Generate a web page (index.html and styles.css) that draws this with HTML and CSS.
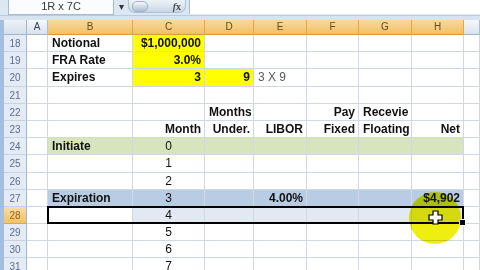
FILE: index.html
```html
<!DOCTYPE html>
<html lang="en">
<head>
  <meta charset="UTF-8" />
  <meta name="viewport" content="width=device-width, initial-scale=1.0" />
  <title>FRA - 1R x 7C</title>
  <link rel="stylesheet" href="styles.css">
</head>
<body>
  <div class="fbar">
    <div class="namebox">1R x 7C</div>
    <div class="nb-arrow">▾</div>
    <div class="fx-pill">
      <span class="grip"></span>
      <span class="fx"><i>f</i>x</span>
    </div>
    <div class="finput"></div>
  </div>

  <div class="sheet" id="sheet"></div>

  <script>
    const cols = ["A", "B", "C", "D", "E", "F", "G", "H", "I"];

    // [row, fill, A, B, C, D, E, F, G, H]  text|classes
    const rows = [
      [18, "", "", "Notional|b", "$1,000,000|b r y"],
      [19, "", "", "FRA Rate|b", "3.0%|b r y"],
      [20, "", "", "Expires|b", "3|b r y", "9|b r y", "3 X 9|g"],
      [21, ""],
      [22, "", "", "", "", "Months|b r", "", "Pay|b r", "Recevie|b r"],
      [23, "", "", "", "Month|b r", "Under.|b r", "LIBOR|b r", "Fixed|b r", "Floating|b r", "Net|b r"],
      [24, "green", "", "Initiate|b", "0|c"],
      [25, "", "", "", "1|c"],
      [26, "", "", "", "2|c"],
      [27, "blue", "", "Expiration|b", "3|c", "", "4.00%|b r", "", "", "$4,902|b r"],
      [28, "shade", "", "", "4|c"],
      [29, "", "", "", "5|c"],
      [30, "", "", "", "6|c"],
      [31, "", "", "", "7|c"]
    ];

    function buildSheet() {
      const sheet = document.getElementById("sheet");
      let html = '<div class="corner"></div>';

      cols.forEach(c => {
        const on = c !== "A" && c !== "I";
        // column I is mostly off-screen, its letter isn't visible
        html += `<div class="colhead ${on ? "on" : ""}">${c === "I" ? "" : c}</div>`;
      });

      rows.forEach(row => {
        const [num, fill, ...cells] = row;
        html += `<div class="rowhead ${num === 28 ? "on" : ""}">${num}</div>`;
        cols.forEach((c, i) => {
          const [text = "", cls = ""] = (cells[i] || "").split("|");
          let bg = "";
          if (fill && i >= 1 && i <= 7) bg = fill;
          if (fill === "shade" && i === 1) bg = "";
          html += `<div class="cell ${cls} ${bg}">${text}</div>`;
        });
      });

      html += '<div class="sel"><span class="handle"></span></div>';
      html += '<div class="spot"></div>';
      html += `
        <svg class="cursor" width="15" height="15" viewBox="0 0 15 15">
          <path d="M5 1h5v4h4v5h-4v4H5v-4H1V5h4z" fill="#fff" stroke="#000" stroke-width="1.2"/>
        </svg>`;
      sheet.innerHTML = html;
    }

    buildSheet();
  </script>
</body>
</html>
```

FILE: styles.css
```css
body {
  margin: 0;
  padding: 0;
  font-family: "Liberation Sans", Arial, sans-serif;
  background-color: #d7e3f1;
  width: 480px;
  height: 270px;
  overflow: hidden;
}
.fbar {
  display: flex;
  align-items: flex-start;
  height: 15px;
  padding-left: 8px;
  margin-bottom: 4px;
  background-color: #dce7f4;
  border-bottom: 1px solid #b9cbe1;
}
.namebox {
  width: 104px;
  height: 14px;
  line-height: 13px;
  background-color: #fbfcfe;
  border: 1px solid #a7bad2;
  border-top: none;
  text-align: center;
  font-size: 11px;
  color: #3a3a3a;
}
.nb-arrow {
  width: 14px;
  font-size: 10px;
  line-height: 13px;
  text-align: center;
  color: #333;
}
.fx-pill {
  display: flex;
  align-items: center;
  justify-content: space-between;
  width: 58px;
  height: 13px;
  padding: 0 4px 0 3px;
  box-sizing: border-box;
  border-radius: 0 0 7px 7px;
  background: linear-gradient(#eef3f9, #c9d6e6);
  border: 1px solid #b0c1d6;
  border-top: none;
}
.grip {
  width: 14px;
  height: 9px;
  border-radius: 5px;
  background: linear-gradient(#f4f7fb, #aebfd4);
  border: 1px solid #9fb2c9;
}
.fx {
  font-family: "Liberation Serif", serif;
  font-size: 10px;
  font-weight: bold;
  color: #4b4b4b;
}
.finput {
  flex: 1;
  height: 14px;
  margin-left: 3px;
  background-color: #fff;
  border-left: 1px solid #a7bad2;
}
.sheet {
  position: relative;
  display: grid;
  grid-template-columns: 23px 21px 85px 72px 49px 53px 52px 53px 52px 1fr;
  grid-template-rows: 15px repeat(14, 17.2px);
  border-left: 4px solid #a4bedf;
  background-color: #fff;
  height: 251px;
}
.corner {
  background: linear-gradient(#eef2f8, #d5dfec);
  border-right: 1px solid #9eb6ce;
  border-bottom: 1px solid #9eb6ce;
}
.colhead {
  font-size: 10px;
  line-height: 14px;
  text-align: center;
  color: #2c4566;
  background: linear-gradient(#f6f8fb, #d9e2ee);
  border-right: 1px solid #a9bdd4;
  border-bottom: 1px solid #9eb6ce;
}
.colhead.on {
  color: #6a4a16;
  background: linear-gradient(#f9d9a0, #f2c064);
  border-right-color: #e0a84c;
  border-bottom-color: #d99a3a;
}
.rowhead {
  font-size: 10px;
  text-align: center;
  line-height: 17px;
  color: #5a6e92;
  background-color: #e4ebf5;
  border-right: 1px solid #9eb6ce;
  border-bottom: 1px solid #c6d3e3;
}
.rowhead.on {
  color: #9a6418;
  background: linear-gradient(#f9dca6, #f1c266);
  border-bottom-color: #e0a84c;
}
.cell {
  font-size: 12px;
  line-height: 17px;
  padding: 0 3px 0 4px;
  white-space: nowrap;
  overflow: visible;
  color: #111;
  border-right: 1px solid #d0d7e5;
  border-bottom: 1px solid #d0d7e5;
}
.cell.b {
  font-weight: bold;
}
.cell.r {
  text-align: right;
}
.cell.c {
  text-align: center;
  padding: 0;
}
.cell.g {
  color: #5b5b5b;
}
.cell.y {
  background-color: #ffff00;
}
.cell.green {
  background-color: #d8e4bc;
}
.cell.blue {
  background-color: #b8cce4;
}
.cell.shade {
  background-color: #e3e9f2;
}
/* absolutely placed inside its grid area, so it doesn't shift the cells */
.sel {
  position: absolute;
  grid-row: 12 / 13;
  grid-column: 3 / 10;
  top: -1px;
  left: -1px;
  right: 0;
  bottom: 0;
  border: 2px solid #000;
}
.handle {
  position: absolute;
  right: -4px;
  bottom: -4px;
  width: 5px;
  height: 5px;
  background-color: #000;
  border: 1px solid #fff;
}
.spot {
  position: absolute;
  left: 405px;
  top: 172px;
  width: 52px;
  height: 52px;
  border-radius: 50%;
  background-color: #eeee10;
  mix-blend-mode: multiply;
}
.cursor {
  position: absolute;
  left: 424px;
  top: 190px;
}
```
